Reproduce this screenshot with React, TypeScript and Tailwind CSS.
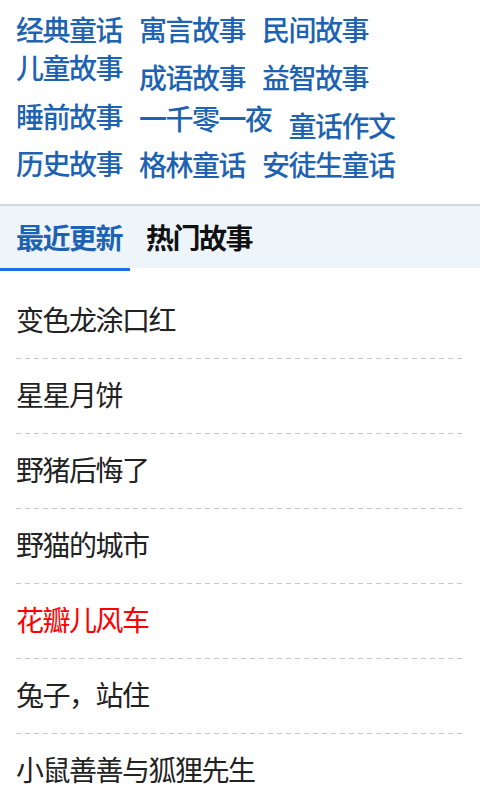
import React from 'react';

const categoryRows: { title: string; offset: string }[][] = [
  [
    { title: '经典童话', offset: 'mt-0' },
    { title: '寓言故事', offset: 'mt-0' },
    { title: '民间故事', offset: 'mt-0' },
  ],
  [
    { title: '儿童故事', offset: 'mt-0' },
    { title: '成语故事', offset: 'mt-[10px]' },
    { title: '益智故事', offset: 'mt-[10px]' },
  ],
  [
    { title: '睡前故事', offset: 'mt-0' },
    { title: '一千零一夜', offset: 'mt-[2px]' },
    { title: '童话作文', offset: 'mt-[9px]' },
  ],
  [
    { title: '历史故事', offset: 'mt-0' },
    { title: '格林童话', offset: 'mt-[1px]' },
    { title: '安徒生童话', offset: 'mt-[1px]' },
  ],
];

const rowGaps = ['mt-0', 'mt-3', 'mt-[13px]', 'mt-3'];

const stories = [
  { title: '变色龙涂口红' },
  { title: '星星月饼' },
  { title: '野猪后悔了' },
  { title: '野猫的城市' },
  { title: '花瓣儿风车', hot: true },
  { title: '兔子，站住' },
  { title: '小鼠善善与狐狸先生' },
];

const App: React.FC = () => {
  return (
    <div
      className="w-[480px] h-[800px] overflow-hidden bg-white"
      style={{ fontFamily: '"Noto Sans CJK SC", "Noto Sans", sans-serif' }}
    >
      {/* categories */}
      <div className="flex flex-col pl-4 pt-4 pb-[27px]">
        {categoryRows.map((row, i) => (
          <div key={i} className={`flex items-start gap-x-[17px] ${rowGaps[i]}`}>
            {row.map(({ title, offset }) => (
              <a
                key={title}
                href="#"
                className={`block text-[28px] leading-[26px] tracking-[-1.5px] font-medium text-[#1d63b1] ${offset}`}
              >
                {title}
              </a>
            ))}
          </div>
        ))}
      </div>

      {/* tabs */}
      <div className="flex h-[64px] items-center border-t-2 border-[#d7d7d7] bg-[#eef5fa]">
        <div className="w-[130px] pl-4 text-[28px] leading-[26px] tracking-[-1.5px] font-bold text-[#1d63b1]">
          最近更新
        </div>
        <div className="pl-4 text-[28px] leading-[26px] tracking-[-1.5px] font-bold text-[#111]">热门故事</div>
      </div>
      <div className="h-[3px] w-[130px] bg-[#1a6fe6]" />

      {/* list */}
      <ul className="pt-[13px]">
        {stories.map(({ title, hot }) => (
          <li key={title} className="mx-4 pt-[22px]">
            <div
              className={`pb-[26px] text-[28px] leading-[26px] tracking-[-1.5px] ${hot ? 'text-[#ff0000]' : 'text-[#222]'}`}
            >
              {title}
            </div>
            <div className="h-px bg-[repeating-linear-gradient(90deg,#c8c8c8_0_5px,transparent_5px_9px)]" />
          </li>
        ))}
      </ul>
    </div>
  );
};

export default App;
